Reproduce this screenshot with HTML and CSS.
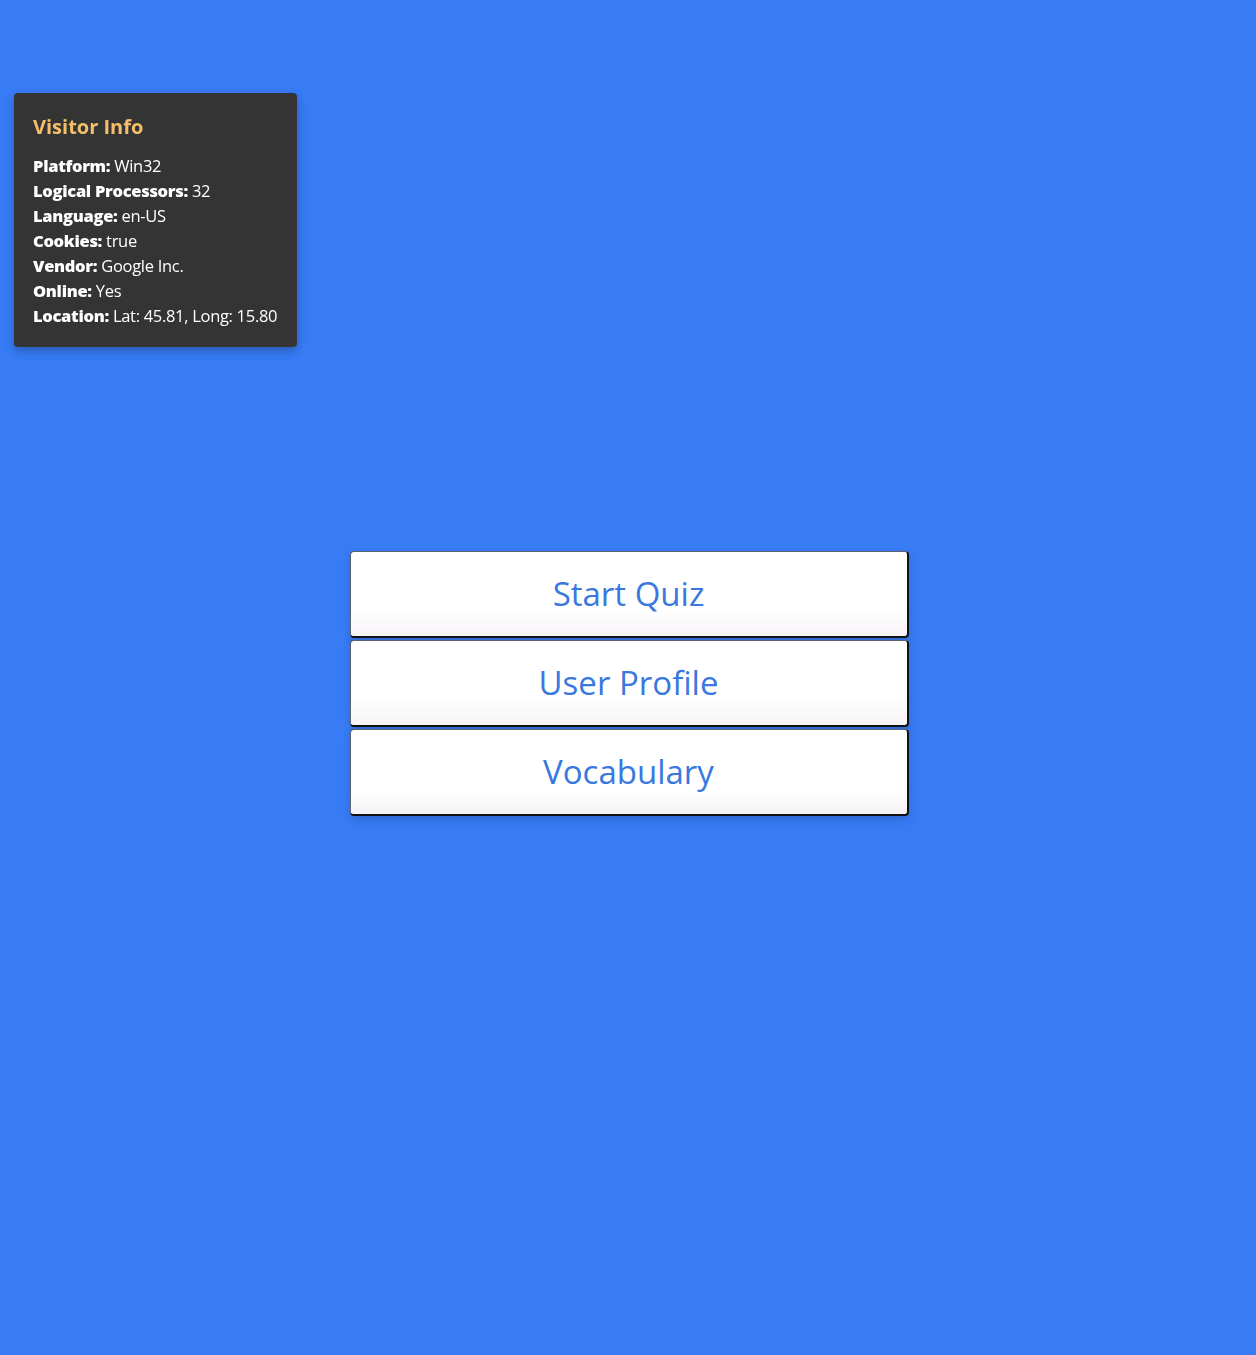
FILE: index.html
```html
<!DOCTYPE html>
<html lang="en">
<head>
<meta charset="utf-8">
<title>Quiz</title>
<link rel="stylesheet" href="styles.css">
</head>
<body>
<aside class="info">
  <h2 class="info-title">Visitor Info</h2>
  <p class="info-row"><b>Platform:</b> Win32</p>
  <p class="info-row"><b>Logical Processors:</b> 32</p>
  <p class="info-row"><b>Language:</b> en-US</p>
  <p class="info-row"><b>Cookies:</b> true</p>
  <p class="info-row"><b>Vendor:</b> Google Inc.</p>
  <p class="info-row"><b>Online:</b> Yes</p>
  <p class="info-row"><b>Location:</b> Lat: 45.81, Long: 15.80</p>
</aside>
<main class="menu">
  <button class="menu-btn">Start Quiz</button>
  <button class="menu-btn">User Profile</button>
  <button class="menu-btn">Vocabulary</button>
</main>
</body>
</html>
```
FILE: styles.css
```css
html, body {
  margin: 0;
  height: 100%;
}
body {
  background: #377bf5;
  font-family: "Open Sans", "Noto Sans", sans-serif;
}
.info {
  position: fixed;
  top: 93px;
  left: 14px;
  width: 283px;
  box-sizing: border-box;
  padding: 20px 10px 19px 19px;
  background: #343434;
  border-radius: 4px;
  box-shadow: 0 4px 10px rgba(0,0,0,0.25);
  color: #fff;
}
.info-title {
  margin: 0 0 12px;
  font-size: 20px;
  font-weight: 700;
  color: #f4bf68;
  line-height: 28px;
}
.info-row {
  margin: 0;
  font-size: 16.5px;
  line-height: 25px;
  letter-spacing: -0.3px;
  white-space: nowrap;
}
.info-row b {
  font-weight: 800;
}
.menu {
  min-height: 100%;
  display: flex;
  flex-direction: column;
  align-items: center;
  justify-content: center;
  gap: 2px;
  padding-top: 11px;
  padding-left: 2px;
  box-sizing: border-box;
}
.menu-btn {
  width: 559px;
  height: 87px;
  box-sizing: border-box;
  background: linear-gradient(#ffffff 70%, #f6f3f6);
  border-style: solid;
  border-width: 1px 2px 2px 1px;
  border-color: #5a6274 #111 #111 #5a6274;
  border-radius: 4px;
  box-shadow: 0 4px 8px rgba(0,0,0,0.15);
  font-family: "Open Sans", "Noto Sans", sans-serif;
  font-size: 33px;
  color: #3a78e0;
  cursor: pointer;
}
```
